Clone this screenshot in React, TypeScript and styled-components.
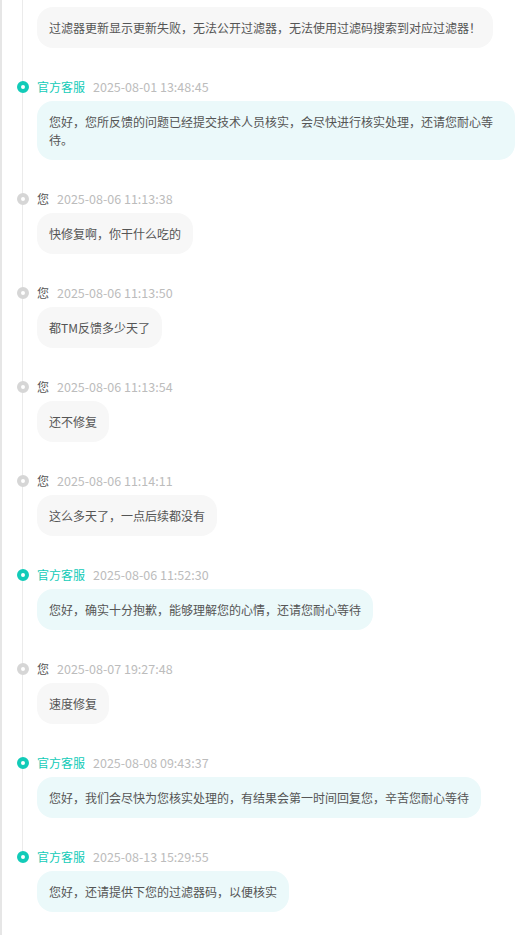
import styled, { createGlobalStyle, css } from "styled-components";

type Author = "user" | "service";

interface IMessage {
    author: Author;
    time: string;
    text: string;
    continued?: boolean;
}

// the first message is scrolled half out of view, its header sits above the window
const MESSAGES: IMessage[] = [
    { author: "user", time: "2025-07-31 16:05:12", text: "过滤器更新显示更新失败，无法公开过滤器，无法使用过滤码搜索到对应过滤器！", continued: true },
    { author: "service", time: "2025-08-01 13:48:45", text: "您好，您所反馈的问题已经提交技术人员核实，会尽快进行核实处理，还请您耐心等待。" },
    { author: "user", time: "2025-08-06 11:13:38", text: "快修复啊，你干什么吃的" },
    { author: "user", time: "2025-08-06 11:13:50", text: "都TM反馈多少天了" },
    { author: "user", time: "2025-08-06 11:13:54", text: "还不修复" },
    { author: "user", time: "2025-08-06 11:14:11", text: "这么多天了，一点后续都没有" },
    { author: "service", time: "2025-08-06 11:52:30", text: "您好，确实十分抱歉，能够理解您的心情，还请您耐心等待" },
    { author: "user", time: "2025-08-07 19:27:48", text: "速度修复" },
    { author: "service", time: "2025-08-08 09:43:37", text: "您好，我们会尽快为您核实处理的，有结果会第一时间回复您，辛苦您耐心等待" },
    { author: "service", time: "2025-08-13 15:29:55", text: "您好，还请提供下您的过滤器码，以便核实" },
];

const TEAL = "#12cbb8";

const GlobalStyle = createGlobalStyle`
  html, body {
    margin: 0;
    padding: 0;
    background: #fff;
  }
  body {
    font-family: "Noto Sans CJK SC", "Noto Sans", sans-serif;
  }
`;

const Page = styled.div`
  min-height: 100vh;
  box-sizing: border-box;
  border-left: 2px solid #e6e6e6;
  padding-right: 16px;
`;

const Timeline = styled.ul`
  list-style: none;
  margin: 0;
  padding: 0;
`;

const Item = styled.li<{ $last: boolean; $continued: boolean }>`
  position: relative;
  display: grid;
  grid-template-columns: 35px minmax(0, 1fr);
  grid-template-rows: ${(p) => (p.$continued ? "auto" : "20px auto")};
  row-gap: 4px;
  padding-top: ${(p) => (p.$continued ? 7 : 0)}px;
  padding-bottom: ${(p) => (p.$last ? 24 : 29)}px;

  &::before {
    content: "";
    position: absolute;
    left: 20px;
    top: 0;
    width: 1px;
    background: #ebebeb;
    ${(p) => (p.$last ? css`height: 10px;` : css`bottom: 0;`)}
  }
`;

const Dot = styled.span<{ $author: Author }>`
  position: relative;
  z-index: 1;
  align-self: center;
  margin-left: 14.5px;
  width: 4px;
  height: 4px;
  border-radius: 50%;
  background: #fff;
  border: 4px solid ${(p) => (p.$author === "service" ? TEAL : "#d6d6d6")};
`;

const Header = styled.div`
  display: flex;
  align-items: center;
  gap: 8px;
  line-height: 20px;
  white-space: nowrap;
`;

const Name = styled.span<{ $author: Author }>`
  font-size: 12px;
  color: ${(p) => (p.$author === "service" ? TEAL : "#555")};
`;

const Time = styled.span`
  font-size: 12.5px;
  color: #bcbcbc;
`;

const Bubble = styled.div<{ $author: Author }>`
  grid-column: 2;
  justify-self: start;
  max-width: 100%;
  box-sizing: border-box;
  padding: 11.5px 12px;
  border-radius: 16px;
  background: ${(p) => (p.$author === "service" ? "#ebf9fa" : "#f7f7f7")};
  color: #555;
  font-size: 12px;
  line-height: 18px;
`;

export default function App() {
    return (
        <Page>
            <GlobalStyle />
            <Timeline>
                {MESSAGES.map((msg, i) => (
                    <Item
                        key={msg.time}
                        $last={i === MESSAGES.length - 1}
                        $continued={!!msg.continued}
                    >
                        {!msg.continued && (
                            <>
                                <Dot $author={msg.author} />
                                <Header>
                                    <Name $author={msg.author}>{msg.author === "service" ? "官方客服" : "您"}</Name>
                                    <Time>{msg.time}</Time>
                                </Header>
                            </>
                        )}
                        <Bubble $author={msg.author}>{msg.text}</Bubble>
                    </Item>
                ))}
            </Timeline>
        </Page>
    );
}
